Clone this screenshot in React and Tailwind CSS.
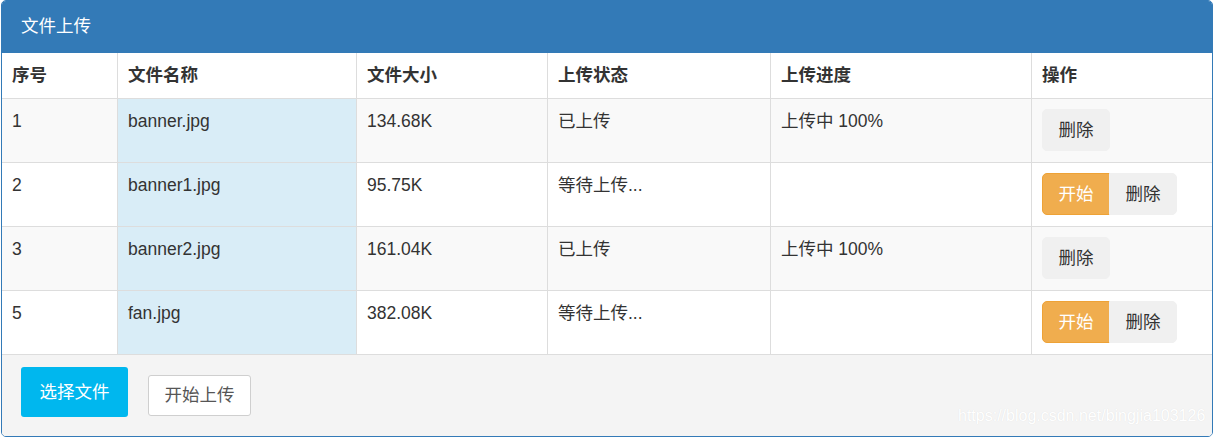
import React from "react";

const rows = [
  { id: "1", name: "banner.jpg", size: "134.68K", status: "已上传", progress: "上传中 100%", start: false, striped: true },
  { id: "2", name: "banner1.jpg", size: "95.75K", status: "等待上传...", progress: "", start: true, striped: false },
  { id: "3", name: "banner2.jpg", size: "161.04K", status: "已上传", progress: "上传中 100%", start: false, striped: true },
  { id: "5", name: "fan.jpg", size: "382.08K", status: "等待上传...", progress: "", start: true, striped: false },
];

const grid = "grid grid-cols-[116px_239px_191px_223px_261px_180px]";

export default function App() {
  return (
    <div
      className="w-[1214px] h-[437px] bg-white overflow-hidden"
      style={{ fontFamily: '"Liberation Sans", "Noto Sans CJK SC", sans-serif' }}
    >
      <div className="relative ml-[1px] w-[1212px] border border-[#337ab7] rounded-[5px] overflow-hidden text-[17.5px] leading-[25px] text-[#333]">
        <div className="h-[52px] bg-[#337ab7] text-white pl-[19px] flex items-center pb-[2px]">
          文件上传
        </div>

        <div className={grid}>
          {["序号", "文件名称", "文件大小", "上传状态", "上传进度", "操作"].map((h, i) => (
            <div
              key={h}
              className={`h-[46px] px-[10px] py-[10px] font-bold border-b border-[#ddd] ${i < 5 ? "border-r" : ""}`}
            >
              {h}
            </div>
          ))}
        </div>

        {rows.map((r) => {
          const bg = r.striped ? "bg-[#f9f9f9]" : "bg-white";
          const cell = `h-[64px] px-[10px] pt-[10px] border-b border-r border-[#ddd] ${bg}`;
          return (
            <div key={r.id} className={grid}>
              <div className={cell}>{r.id}</div>
              <div className="h-[64px] px-[10px] pt-[10px] border-b border-r border-[#ddd] bg-[#d9edf7]">{r.name}</div>
              <div className={cell}>{r.size}</div>
              <div className={cell}>{r.status}</div>
              <div className={cell}>{r.progress}</div>
              <div className={`h-[64px] px-[10px] pt-[10px] border-b border-[#ddd] ${bg} flex items-start`}>
                {r.start ? (
                  <>
                    <button className="w-[68px] h-[42px] bg-[#f0ad4e] border border-[#eea236] text-white rounded-l-[5px]">
                      开始
                    </button>
                    <button className="w-[68px] h-[42px] -ml-px bg-[#f0f0f0] border border-[#f0f0f0] text-[#333] rounded-r-[5px]">
                      删除
                    </button>
                  </>
                ) : (
                  <button className="w-[68px] h-[42px] bg-[#f0f0f0] border border-[#f0f0f0] text-[#333] rounded-[5px]">
                    删除
                  </button>
                )}
              </div>
            </div>
          );
        })}

        <div className="h-[81px] bg-[#f4f4f4] pl-[19px] pt-[12px] flex items-start">
          <button className="w-[107px] h-[50px] bg-[#00b7ee] text-white rounded-[3px]">选择文件</button>
          <button className="w-[103px] h-[41px] mt-[8px] ml-[20px] bg-white border border-[#cfcfcf] text-[#565656] rounded-[3px]">
            开始上传
          </button>
        </div>

        <div
          className="absolute left-[956px] top-[405px] text-[16px] leading-[20px] text-white whitespace-nowrap"
          style={{ textShadow: "0 0 1px rgba(0,0,0,0.1)", fontFamily: '"Liberation Sans", sans-serif' }}
        >
          https://blog.csdn.net/bingjia103126
        </div>
      </div>
    </div>
  );
}
